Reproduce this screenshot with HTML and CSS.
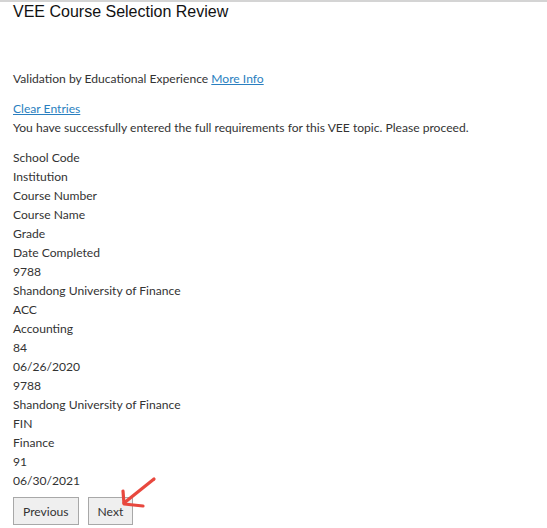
FILE: index.html
```html
<!DOCTYPE html>
<html lang="en">
<head>
    <meta charset="UTF-8">
    <title>VEE Course Selection Review</title>
    <link rel="stylesheet" href="styles.css">
</head>
<body>
    <div class="page">
        <h1 class="title">VEE Course Selection Review</h1>
        <p class="intro">Validation by Educational Experience <a href="#">More Info</a></p>
        <div class="status">
            <a href="#">Clear Entries</a>
            <div>You have successfully entered the full requirements for this VEE topic. Please proceed.</div>
        </div>
        <div class="review">
            <div>School Code</div>
            <div>Institution</div>
            <div>Course Number</div>
            <div>Course Name</div>
            <div>Grade</div>
            <div>Date Completed</div>
            <div>9788</div>
            <div>Shandong University of Finance</div>
            <div>ACC</div>
            <div>Accounting</div>
            <div>84</div>
            <div>06/26/2020</div>
            <div>9788</div>
            <div>Shandong University of Finance</div>
            <div>FIN</div>
            <div>Finance</div>
            <div>91</div>
            <div>06/30/2021</div>
        </div>
        <div class="nav">
            <button class="button">Previous</button>
            <span class="next-wrap">
                <button class="button">Next</button>
                <svg class="arrow" width="40" height="36" viewBox="0 0 40 36">
                    <path d="M33 3 L3 27" stroke="#e8483e" stroke-width="3.2" stroke-linecap="round" fill="none"/>
                    <path d="M2 15 L3 28 L22 30" stroke="#e8483e" stroke-width="3.2" stroke-linecap="round" stroke-linejoin="round" fill="none"/>
                </svg>
            </span>
        </div>
    </div>
</body>
</html>
```

FILE: styles.css
```css
body {
    margin: 0;
    background: #fff;
    font-family: Lato, "Open Sans", sans-serif;
    font-size: 12.1px;
    color: #333;
}
.page {
    border-top: 2px solid #d4d4d4;
    padding: 0 13px;
    height: 526px;
    overflow: hidden;
}
.title {
    margin: 0;
    padding-top: 1px;
    font-family: "Liberation Sans", Arial, sans-serif;
    font-weight: normal;
    font-size: 16px;
    line-height: 18px;
    color: #111;
}
.intro {
    margin: 48px 0 0;
    line-height: 19px;
}
a {
    color: #2a7fc0;
    text-decoration: underline;
}
.status {
    margin-top: 11px;
    line-height: 19px;
}
.review {
    margin-top: 11px;
    line-height: 19px;
}
.nav {
    display: flex;
    gap: 9px;
    margin-top: 7px;
}
.button {
    font-family: Lato, "Open Sans", sans-serif;
    font-size: 12.1px;
    color: #333;
    background: #efefef;
    border: 1px solid #a8a8a8;
    height: 28px;
    padding: 0 9px;
    cursor: pointer;
}
.next-wrap {
    position: relative;
}
.arrow {
    position: absolute;
    left: 33px;
    top: -21px;
}
```
